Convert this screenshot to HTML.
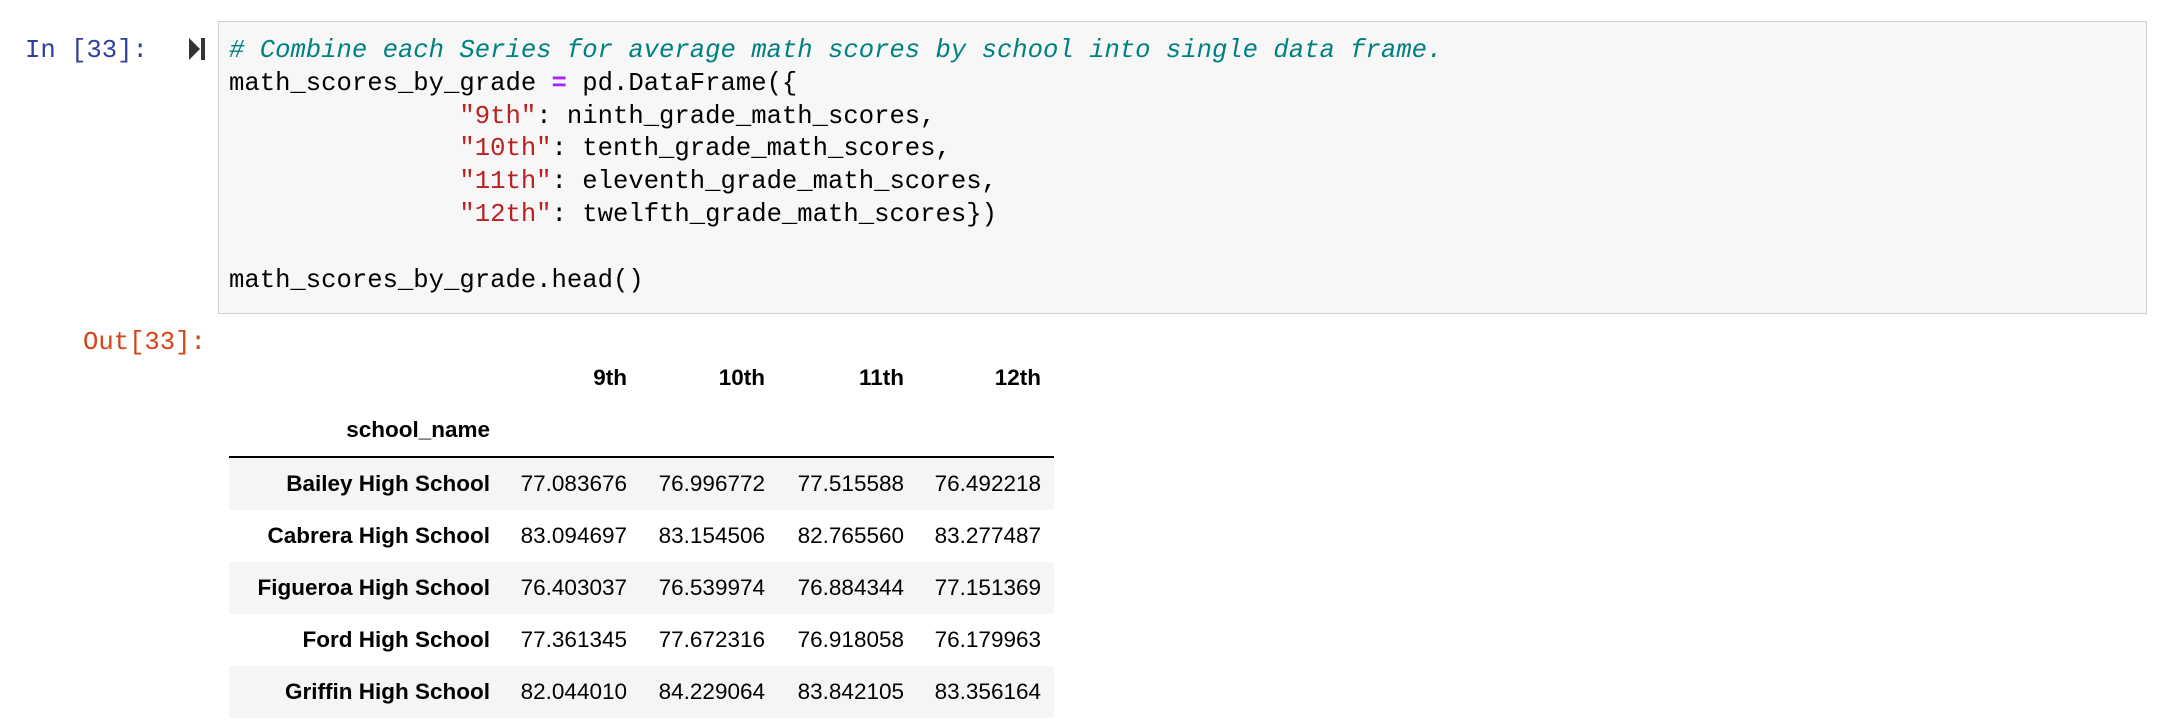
<!DOCTYPE html>
<html><head><meta charset="utf-8"><style>
body{margin:0;width:2177px;height:724px;background:#fff;position:relative;overflow:hidden;font-family:"Liberation Sans",Arial,sans-serif}
.abs{position:absolute}
.mono{font-family:"Liberation Mono","DejaVu Sans Mono",monospace;font-size:25.6px;line-height:32.8px;white-space:pre}
.box{left:218px;top:21px;width:1929px;height:293px;background:#f7f7f7;border:1.5px solid #cfcfcf;box-sizing:border-box}
.c{color:#008080;font-style:italic}
.s{color:#ba2121}
.o{color:#aa22ff;font-weight:bold}
table{border-collapse:collapse;font-size:22.5px;color:#000}
td,th{text-align:right;padding:0;height:52px}
th{font-weight:bold}
tbody tr:nth-child(odd){background:#f5f5f5}
</style></head><body>
<div class="abs mono" style="left:25px;top:35px;color:#303f9f">In [33]:</div>
<svg class="abs" style="left:186px;top:37px" width="22" height="25"><polygon points="3,1 14,12 3,23" fill="#333"/><rect x="15" y="1" width="4" height="22" fill="#333"/></svg>
<div class="abs box"></div>
<div class="abs mono" style="left:229px;top:35px;color:#000"><span class="c"># Combine each Series for average math scores by school into single data frame.</span>
math_scores_by_grade <span class="o">=</span> pd.DataFrame({
               <span class="s">"9th"</span>: ninth_grade_math_scores,
               <span class="s">"10th"</span>: tenth_grade_math_scores,
               <span class="s">"11th"</span>: eleventh_grade_math_scores,
               <span class="s">"12th"</span>: twelfth_grade_math_scores})

math_scores_by_grade.head()</div>
<div class="abs mono" style="left:83px;top:327px;color:#d84315">Out[33]:</div>
<table class="abs" style="left:229px;top:352px;width:825px">
<colgroup><col style="width:261px"><col style="width:137px"><col style="width:138px"><col style="width:139px"><col style="width:150px"></colgroup>
<thead>
<tr style="height:52px"><th></th><th>9th</th><th>10th</th><th>11th</th><th style="padding-right:13px">12th</th></tr>
<tr style="border-bottom:2px solid #000"><th>school_name</th><th></th><th></th><th></th><th></th></tr>
</thead>
<tbody>
<tr><th>Bailey High School</th><td>77.083676</td><td>76.996772</td><td>77.515588</td><td style="padding-right:13px">76.492218</td></tr>
<tr><th>Cabrera High School</th><td>83.094697</td><td>83.154506</td><td>82.765560</td><td style="padding-right:13px">83.277487</td></tr>
<tr><th>Figueroa High School</th><td>76.403037</td><td>76.539974</td><td>76.884344</td><td style="padding-right:13px">77.151369</td></tr>
<tr><th>Ford High School</th><td>77.361345</td><td>77.672316</td><td>76.918058</td><td style="padding-right:13px">76.179963</td></tr>
<tr><th>Griffin High School</th><td>82.044010</td><td>84.229064</td><td>83.842105</td><td style="padding-right:13px">83.356164</td></tr>
</tbody></table>
</body></html>
